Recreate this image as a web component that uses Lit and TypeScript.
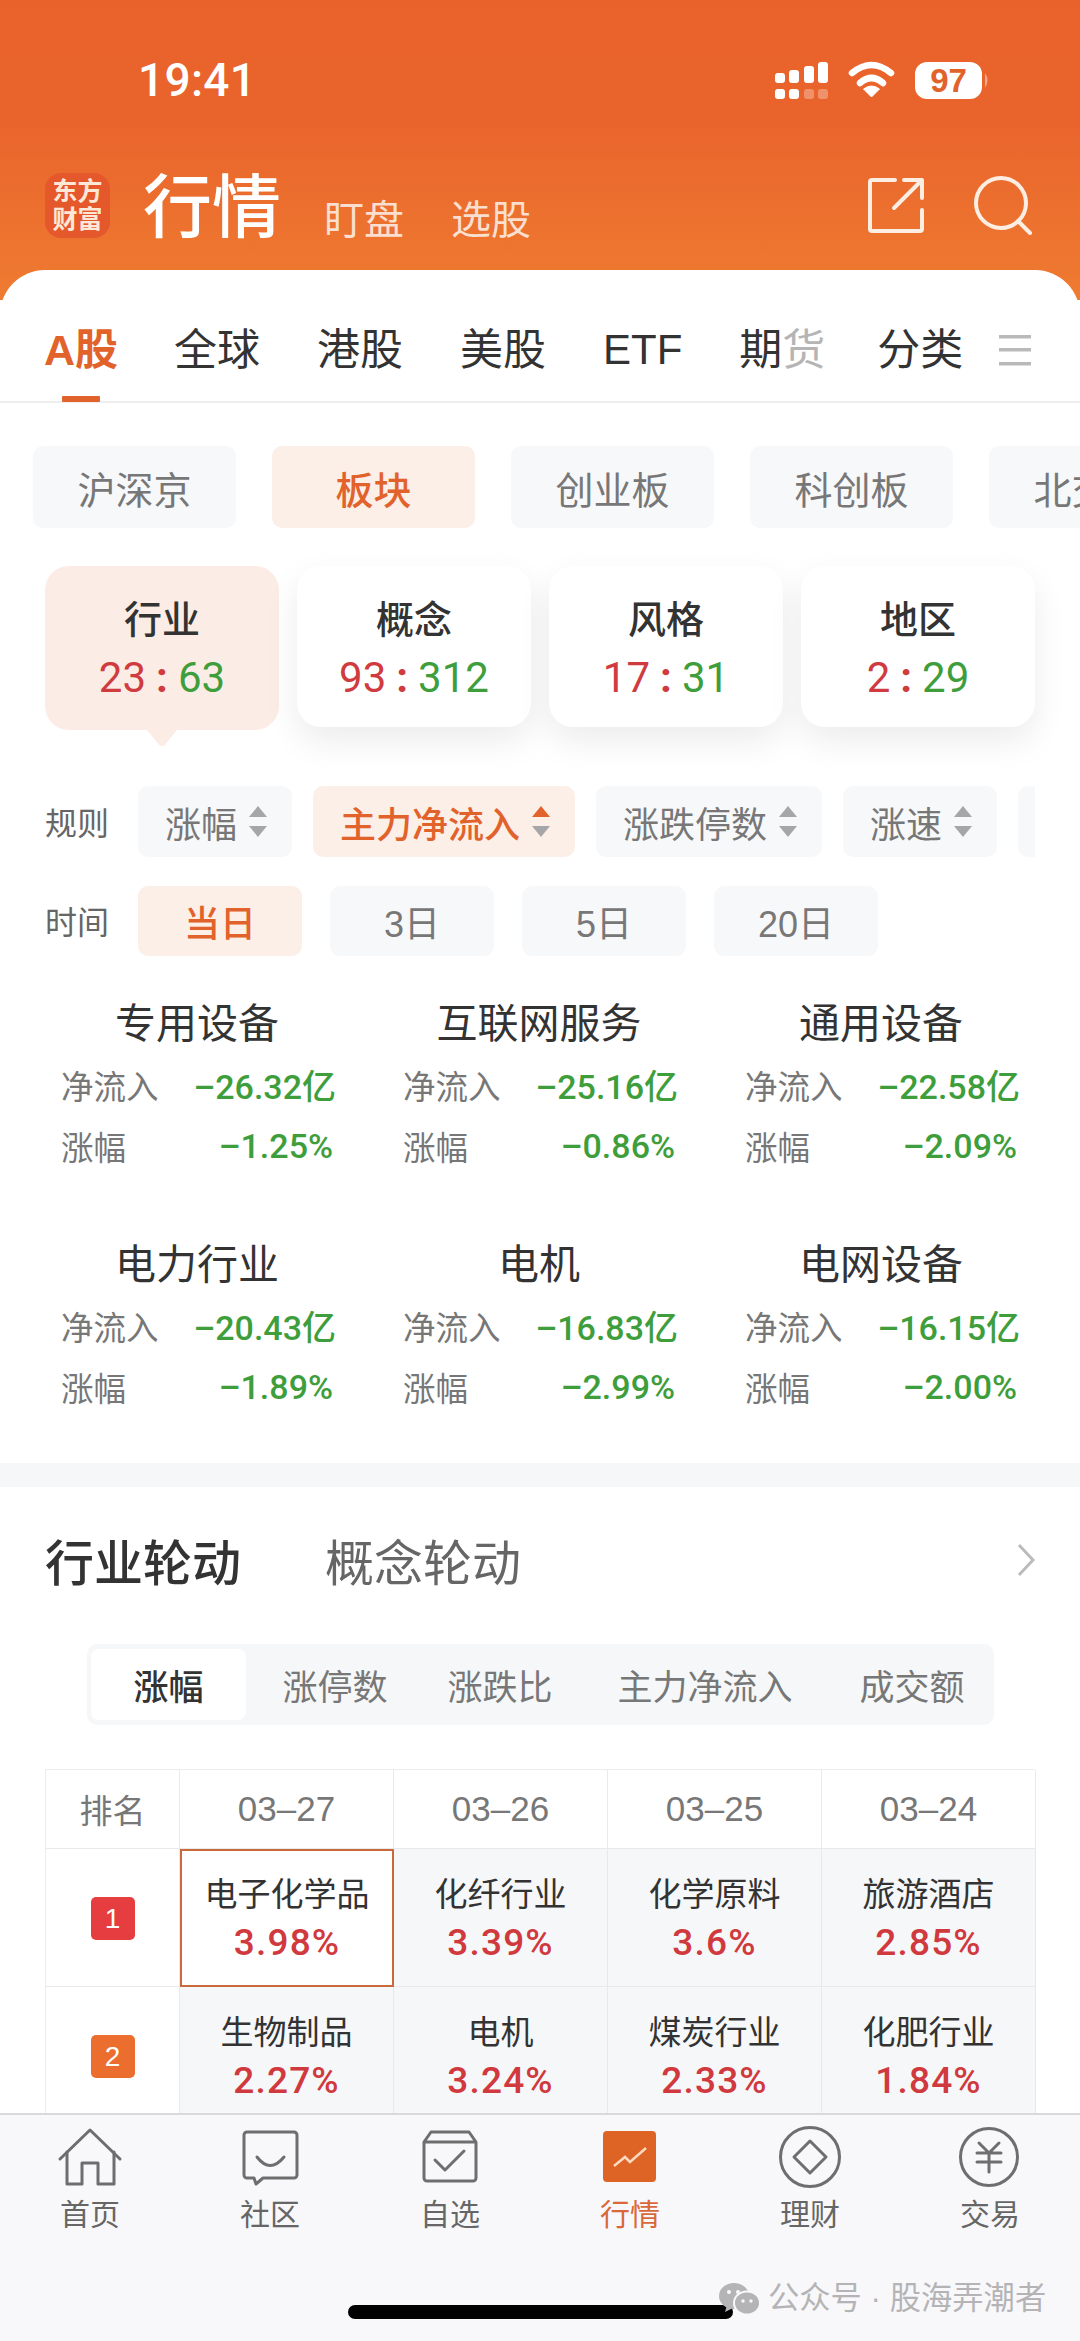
import { LitElement, html, css } from "lit";
import { customElement } from "lit/decorators.js";

const TABS = ["全球", "港股", "美股", "ETF"];
const CHIPS = ["沪深京", "板块", "创业板", "科创板", "北交所"];
const SECTORS = [
  ["行业", "23", "63"],
  ["概念", "93", "312"],
  ["风格", "17", "31"],
  ["地区", "2", "29"],
];
const RULES = ["涨幅", "主力净流入", "涨跌停数", "涨速"];
const TIMES = ["当日", "3日", "5日", "20日"];
const METRICS = [
  ["专用设备", "–26.32亿", "–1.25%"],
  ["互联网服务", "–25.16亿", "–0.86%"],
  ["通用设备", "–22.58亿", "–2.09%"],
  ["电力行业", "–20.43亿", "–1.89%"],
  ["电机", "–16.83亿", "–2.99%"],
  ["电网设备", "–16.15亿", "–2.00%"],
];
const SEG = ["涨幅", "涨停数", "涨跌比", "主力净流入", "成交额"];
const DATES = ["03–27", "03–26", "03–25", "03–24"];
const ROWS: [string, string][][] = [
  [["电子化学品", "3.98%"], ["化纤行业", "3.39%"], ["化学原料", "3.6%"], ["旅游酒店", "2.85%"]],
  [["生物制品", "2.27%"], ["电机", "3.24%"], ["煤炭行业", "2.33%"], ["化肥行业", "1.84%"]],
];

@customElement("app-root")
export class AppRoot extends LitElement {
  static styles = css`
    :host {
      display: block;
      width: 1080px;
      height: 2341px;
      font-family: "Liberation Sans", "Noto Sans CJK SC", sans-serif;
      color: #333;
    }
    * { box-sizing: border-box; }
    svg { display: block; flex-shrink: 0; }
    .app {
      position: relative;
      width: 1080px;
      height: 2341px;
      overflow: hidden;
      display: flex;
      flex-direction: column;
      background: linear-gradient(#e9622b 0, #e9642c 120px, #ef7b31 300px) no-repeat;
      background-size: 100% 300px;
    }
    .main { height: 2113px; overflow: hidden; flex-shrink: 0; }
    .status { height: 160px; display: flex; align-items: center; justify-content: space-between; color: #fff; padding: 0 0 0 138px; }
    .time { font: 500 46px Roboto, sans-serif; letter-spacing: 0.3px; }
    .status svg { margin-right: 80px; }
    .batt-text { font: 700 33px "Liberation Sans", sans-serif; fill: #e2622b; }
    .title-row { height: 110px; padding: 0 48px 20px 45px; display: flex; align-items: center; color: #fff; }
    .logo {
      width: 65px; height: 65px; border-radius: 16px; background: #e5582b;
      color: #fde7d6; font-size: 25px; line-height: 28px; font-weight: 700;
      display: flex; flex-direction: column; align-items: center; justify-content: center;
      margin-right: 33px;
    }
    .page-title { font-size: 69px; font-weight: 500; line-height: 90px; width: 181px; margin-top: 8px; }
    .sub { font-size: 40px; line-height: 50px; color: rgba(255, 255, 255, 0.78); margin: 30px 47px 0 0; }
    .spacer { flex: 1; }
    .panel { background: #fff; border-radius: 45px 45px 0 0; }
    .tabs {
      height: 133px; border-bottom: 2px solid #eeeeee; padding: 52px 0 0 44px;
      display: flex; font-size: 43px; line-height: 56px; color: #333;
    }
    .tab { margin-right: 57px; white-space: nowrap; }
    .tab.etf { font-size: 42px; margin-right: 57px; }
    .tab.fut { margin-right: 52px; }
    .tabs .on { color: #e2622b; font-weight: 700; width: 73px; position: relative; }
    .tabs .on::after {
      content: ""; position: absolute; left: 18px; top: 74px; width: 38px; height: 6px; background: #e2622b; border-radius: 1px;
    }
    .tabs .fade { color: #b5b5b5; }
    .menu { margin: 11px 0 0 -22px; }
    .chips { display: flex; gap: 36px; padding: 43px 0 0 33px; overflow: hidden; }
    .chip {
      flex-shrink: 0; width: 203px; height: 82px; border-radius: 10px; background: #f7f8fa;
      font-size: 38px; color: #777; display: flex; align-items: center; justify-content: center;
    }
    .chip.on, .pill.on { background: #fcefe8; color: #e2622b; font-weight: 500; }
    .sectors { display: grid; grid-template-columns: repeat(4, 234px); gap: 18px; padding: 38px 45px 0; height: 199px; }
    .sector {
      height: 161px; border-radius: 24px; background: #fff; box-shadow: 0 14px 34px rgba(0, 0, 0, 0.08);
      display: flex; flex-direction: column; align-items: center; padding-top: 30px; position: relative;
    }
    .sector.on { height: 164px; background: #fbece5; box-shadow: none; }
    .sector.on::after {
      content: ""; position: absolute; left: 102px; top: 154px; width: 30px; height: 26px;
      background: #fbece5; clip-path: polygon(0 38%, 100% 38%, 56% 100%, 44% 100%);
    }
    .sector .name { font-size: 38px; line-height: 48px; font-weight: 500; color: #333; }
    .sector .nums { font: 400 42px/50px Roboto, sans-serif; margin-top: 9px; }
    .up { color: #cf3b3f; }
    .down { color: #3f9e3c; }
    .colon { color: #cf3b3f; padding: 0 10px; font-weight: 700; }
    .row { display: flex; align-items: center; padding: 0 45px; }
    .row .label { width: 93px; flex-shrink: 0; font-size: 32px; color: #666; margin-top: -2px; }
    .pills { display: flex; gap: 21px; overflow: hidden; flex: 1; }
    .rules { margin-top: 59px; height: 71px; }
    .times { margin-top: 29px; height: 70px; }
    .pill {
      flex-shrink: 0; height: 71px; padding: 0 25px 0 27px; border-radius: 10px; background: #f7f8fa;
      font-size: 36px; color: #777; display: flex; align-items: center; gap: 12px;
    }
    .pill.blank { width: 150px; }
    .times .pills { gap: 28px; }
    .times .pill { width: 164px; height: 70px; justify-content: center; padding: 0; }
    .metrics { display: grid; grid-template-columns: repeat(3, 272px); column-gap: 70px; row-gap: 59px; padding: 38px 0 46px 61px; }
    .metric .t { height: 60px; line-height: 60px; text-align: center; font-size: 41px; color: #333; }
    .metric .l { height: 61px; display: flex; align-items: center; justify-content: space-between; font-size: 32.5px; color: #777; }
    .metric .v { font: 500 34px Roboto, "Noto Sans CJK SC", sans-serif; color: #3f9e3c; }
    .metric .v.flow { margin-right: -3px; }
    .band { height: 24px; background: #f6f7f9; }
    .heading { height: 149px; padding: 0 45px 4px; display: flex; align-items: center; font-size: 49px; }
    .heading .a { font-weight: 500; color: #333; margin-right: 84px; }
    .heading .b { color: #666; flex: 1; }
    .seg {
      margin: 8px 0 0 87px; width: 907px; height: 81px; padding: 5px 4px; background: #f6f7f9; border-radius: 10px;
      display: grid; grid-template-columns: 155px 178px 152px 258px 156px;
    }
    .seg div { display: flex; align-items: center; justify-content: center; font-size: 35px; color: #777; }
    .seg .on { background: #fff; color: #333; font-weight: 500; border-radius: 8px; }
    .table {
      margin: 44px 45px 0; display: grid; grid-template-columns: 134px repeat(4, 214px); grid-template-rows: 79px; grid-auto-rows: 138px;
      border-left: 1.5px solid #eceded; border-top: 1.5px solid #eceded;
    }
    .th, .td { border-right: 1.5px solid #e9e9ec; border-bottom: 1.5px solid #e9e9ec; display: flex; flex-direction: column; align-items: center; justify-content: center; }
    .th { font-size: 35px; color: #777; }
    .th.rk { font-size: 33px; }
    .td { background: #f6f7f9; padding-top: 2px; }
    .td.rank { background: #fff; }
    .td.hl { background: #fff; border: 2px solid #c96a3c; }
    .td .n { font-size: 33px; line-height: 48px; color: #333; }
    .td .p { font: 500 37px/48px Roboto, sans-serif; letter-spacing: 1.2px; color: #d0393d; }
    .badge { width: 44px; height: 43px; border-radius: 5px; color: #fff; font-size: 28px; display: flex; align-items: center; justify-content: center; }
    .b1 { background: #e63e40; }
    .b2 { background: #ec6e2f; }
    .bar { flex: 1; background: #f8f8fa; border-top: 2px solid #d9d9dc; display: grid; grid-template-columns: repeat(6, 180px); align-content: start; padding-top: 10px; }
    .item { display: flex; flex-direction: column; align-items: center; font-size: 30px; color: #666; }
    .item span { line-height: 40px; margin-top: 6px; }
    .item.on { color: #d9693a; }
    .mark { position: absolute; left: 719px; top: 2280px; display: flex; align-items: center; gap: 8px; font-size: 31.3px; color: #b4b4b6; line-height: 38px; white-space: nowrap; }
    .home { position: absolute; left: 348px; top: 2305px; width: 385px; height: 14px; border-radius: 7px; background: #000; }
  `;

  private sort(on = false) {
    return html`<svg width="18" height="31" viewBox="0 0 18 31">
      <path d="M9 0 18 11H0Z" fill=${on ? "#e2622b" : "#a6a6a8"}></path>
      <path d="M9 31 18 20H0Z" fill="#a6a6a8"></path>
    </svg>`;
  }

  render() {
    return html`<div class="app">
      <div class="main">
        <div class="status">
          <div class="time">19:41</div>
          <svg width="225" height="50" viewBox="775 55 225 50" fill="#fff">
            <rect x="775" y="73" width="10" height="10" rx="3"></rect>
            <rect x="789" y="70" width="10" height="13" rx="3"></rect>
            <rect x="804" y="66" width="10" height="17" rx="3"></rect>
            <rect x="818" y="62" width="10" height="21" rx="3"></rect>
            <rect x="775" y="89" width="10" height="10" rx="3"></rect>
            <rect x="789" y="89" width="10" height="10" rx="3"></rect>
            <rect x="804" y="89" width="10" height="10" rx="3" opacity=".3"></rect>
            <rect x="818" y="89" width="10" height="10" rx="3" opacity=".3"></rect>
            <path d="M852 73Q871.5 57 891 73M860 83Q871.5 73 883 83" fill="none" stroke="#fff" stroke-width="6.5" stroke-linecap="round"></path>
            <path d="M871.5 97 863.5 89Q871.5 83 879.5 89Z" stroke="#fff" stroke-width="1" stroke-linejoin="round"></path>
            <rect x="915" y="62" width="67" height="37" rx="12"></rect>
            <text x="948.5" y="92" text-anchor="middle" class="batt-text">97</text>
            <path d="M985 73Q990 80 985 88Z" opacity=".45"></path>
          </svg>
        </div>
        <div class="title-row">
          <div class="logo"><div>东方</div><div>财富</div></div>
          <div class="page-title">行情</div>
          <div class="sub">盯盘</div>
          <div class="sub">选股</div>
          <div class="spacer"></div>
          <svg width="165" height="60" viewBox="868 175 165 60" fill="none" stroke="#fdeee3" stroke-width="4" stroke-linecap="round" stroke-linejoin="round">
            <path d="M896 180H873a2 2 0 0 0-2 2V229a2 2 0 0 0 2 2H921a2 2 0 0 0 2-2V210"></path>
            <path d="M895 208 922 181M905 180H923V198"></path>
            <circle cx="1002" cy="203" r="25"></circle>
            <path d="M1019 221 1031 233"></path>
          </svg>
        </div>
        <div class="panel">
          <div class="tabs">
            <div class="tab on">A股</div>
            ${TABS.map((t) => html`<div class="tab ${t === "ETF" ? "etf" : ""}">${t}</div>`)}
            <div class="tab fut">期<span class="fade">货</span></div>
            <div class="tab">分类</div>
            <svg class="menu" width="34" height="34" viewBox="0 0 34 34" fill="#b9b9b9">
              <rect x="1" y="2" width="32" height="3.5"></rect>
              <rect x="1" y="15" width="32" height="3.5"></rect>
              <rect x="1" y="29" width="32" height="3.5"></rect>
            </svg>
          </div>
          <div class="chips">
            ${CHIPS.map((c, i) => html`<div class="chip ${i === 1 ? "on" : ""}">${c}</div>`)}
          </div>
          <div class="sectors">
            ${SECTORS.map(
              (s, i) => html`<div class="sector ${i === 0 ? "on" : ""}">
                <div class="name">${s[0]}</div>
                <div class="nums"><span class="up">${s[1]}</span><span class="colon">:</span><span class="down">${s[2]}</span></div>
              </div>`
            )}
          </div>
          <div class="row rules">
            <div class="label">规则</div>
            <div class="pills">
              ${RULES.map((r, i) => html`<div class="pill ${i === 1 ? "on" : ""}">${r}${this.sort(i === 1)}</div>`)}
              <div class="pill blank"></div>
            </div>
          </div>
          <div class="row times">
            <div class="label">时间</div>
            <div class="pills">
              ${TIMES.map((t, i) => html`<div class="pill ${i === 0 ? "on" : ""}">${t}</div>`)}
            </div>
          </div>
          <div class="metrics">
            ${METRICS.map(
              (m) => html`<div class="metric">
                <div class="t">${m[0]}</div>
                <div class="l"><span>净流入</span><span class="v flow">${m[1]}</span></div>
                <div class="l"><span>涨幅</span><span class="v">${m[2]}</span></div>
              </div>`
            )}
          </div>
          <div class="band"></div>
          <div class="heading">
            <div class="a">行业轮动</div>
            <div class="b">概念轮动</div>
            <svg width="18" height="34" viewBox="0 0 18 34" fill="none" stroke="#bbb" stroke-width="3"><path d="M2 2 16 17 2 32"></path></svg>
          </div>
          <div class="seg">
            ${SEG.map((s, i) => html`<div class=${i === 0 ? "on" : ""}>${s}</div>`)}
          </div>
          <div class="table">
            <div class="th rk">排名</div>
            ${DATES.map((d) => html`<div class="th">${d}</div>`)}
            ${ROWS.map(
              (r, ri) => html`
                <div class="td rank"><div class="badge ${ri === 0 ? "b1" : "b2"}">${ri + 1}</div></div>
                ${r.map(
                  (c, ci) => html`<div class="td ${ri === 0 && ci === 0 ? "hl" : ""}">
                    <div class="n">${c[0]}</div>
                    <div class="p">${c[1]}</div>
                  </div>`
                )}
              `
            )}
          </div>
        </div>
      </div>
      <div class="bar">
        <div class="item">
          <svg width="80" height="64" viewBox="50 2125 80 64" fill="none" stroke="#6e6e6e" stroke-width="3" stroke-linejoin="round" stroke-linecap="round">
            <path d="M60 2159 90 2130 120 2159"></path>
            <path d="M67 2152V2184H82V2163H98V2184H114V2152"></path>
          </svg>
          <span>首页</span>
        </div>
        <div class="item">
          <svg width="80" height="64" viewBox="230 2125 80 64" fill="none" stroke="#6e6e6e" stroke-width="3" stroke-linejoin="round" stroke-linecap="round">
            <path d="M247 2132H294a3 3 0 0 1 3 3V2175a3 3 0 0 1-3 3H263L256 2184 254 2178H247a3 3 0 0 1-3-3V2135a3 3 0 0 1 3-3Z"></path>
            <path d="M257 2157Q270 2174 284 2157"></path>
          </svg>
          <span>社区</span>
        </div>
        <div class="item">
          <svg width="80" height="64" viewBox="410 2125 80 64" fill="none" stroke="#6e6e6e" stroke-width="3" stroke-linejoin="round" stroke-linecap="round">
            <path d="M424 2142 431 2132H469L476 2142V2178a3 3 0 0 1-3 3H427a3 3 0 0 1-3-3ZM424 2142H476"></path>
            <path d="M435 2160 445 2170 464 2151"></path>
          </svg>
          <span>自选</span>
        </div>
        <div class="item on">
          <svg width="80" height="64" viewBox="590 2125 80 64">
            <rect x="603" y="2131" width="53" height="51" rx="4" fill="#dd6425"></rect>
            <path d="M614 2166 625 2157 630 2162 646 2148" fill="none" stroke="#fbd9bf" stroke-width="2.5"></path>
          </svg>
          <span>行情</span>
        </div>
        <div class="item">
          <svg width="80" height="64" viewBox="770 2125 80 64" fill="none" stroke="#6e6e6e" stroke-width="3" stroke-linejoin="round">
            <circle cx="810" cy="2157" r="29.5"></circle>
            <path d="M810 2141 826 2157 810 2173 794 2157Z"></path>
          </svg>
          <span>理财</span>
        </div>
        <div class="item">
          <svg width="80" height="64" viewBox="950 2125 80 64" fill="none" stroke="#6e6e6e" stroke-width="3" stroke-linecap="round">
            <circle cx="989" cy="2157" r="28.5"></circle>
            <path d="M979 2143 989 2153 999 2143M977 2153H1001M977 2162H1001M989 2153V2172"></path>
          </svg>
          <span>交易</span>
        </div>
      </div>
      <div class="home"></div>
      <div class="mark">
        <svg width="41" height="34" viewBox="0 0 41 34">
          <ellipse cx="15" cy="14" rx="15" ry="13" fill="#b4b4b6"></ellipse>
          <path d="M8 23 6 30 14 26Z" fill="#b4b4b6"></path>
          <ellipse cx="28" cy="21" rx="13" ry="11.5" fill="#b4b4b6" stroke="#f8f8fa" stroke-width="2"></ellipse>
          <circle cx="10" cy="10" r="2" fill="#f8f8fa"></circle>
          <circle cx="19" cy="10" r="2" fill="#f8f8fa"></circle>
          <circle cx="24" cy="19" r="1.7" fill="#f8f8fa"></circle>
          <circle cx="32" cy="19" r="1.7" fill="#f8f8fa"></circle>
        </svg>
        <span>公众号 · 股海弄潮者</span>
      </div>
    </div>`;
  }
}
